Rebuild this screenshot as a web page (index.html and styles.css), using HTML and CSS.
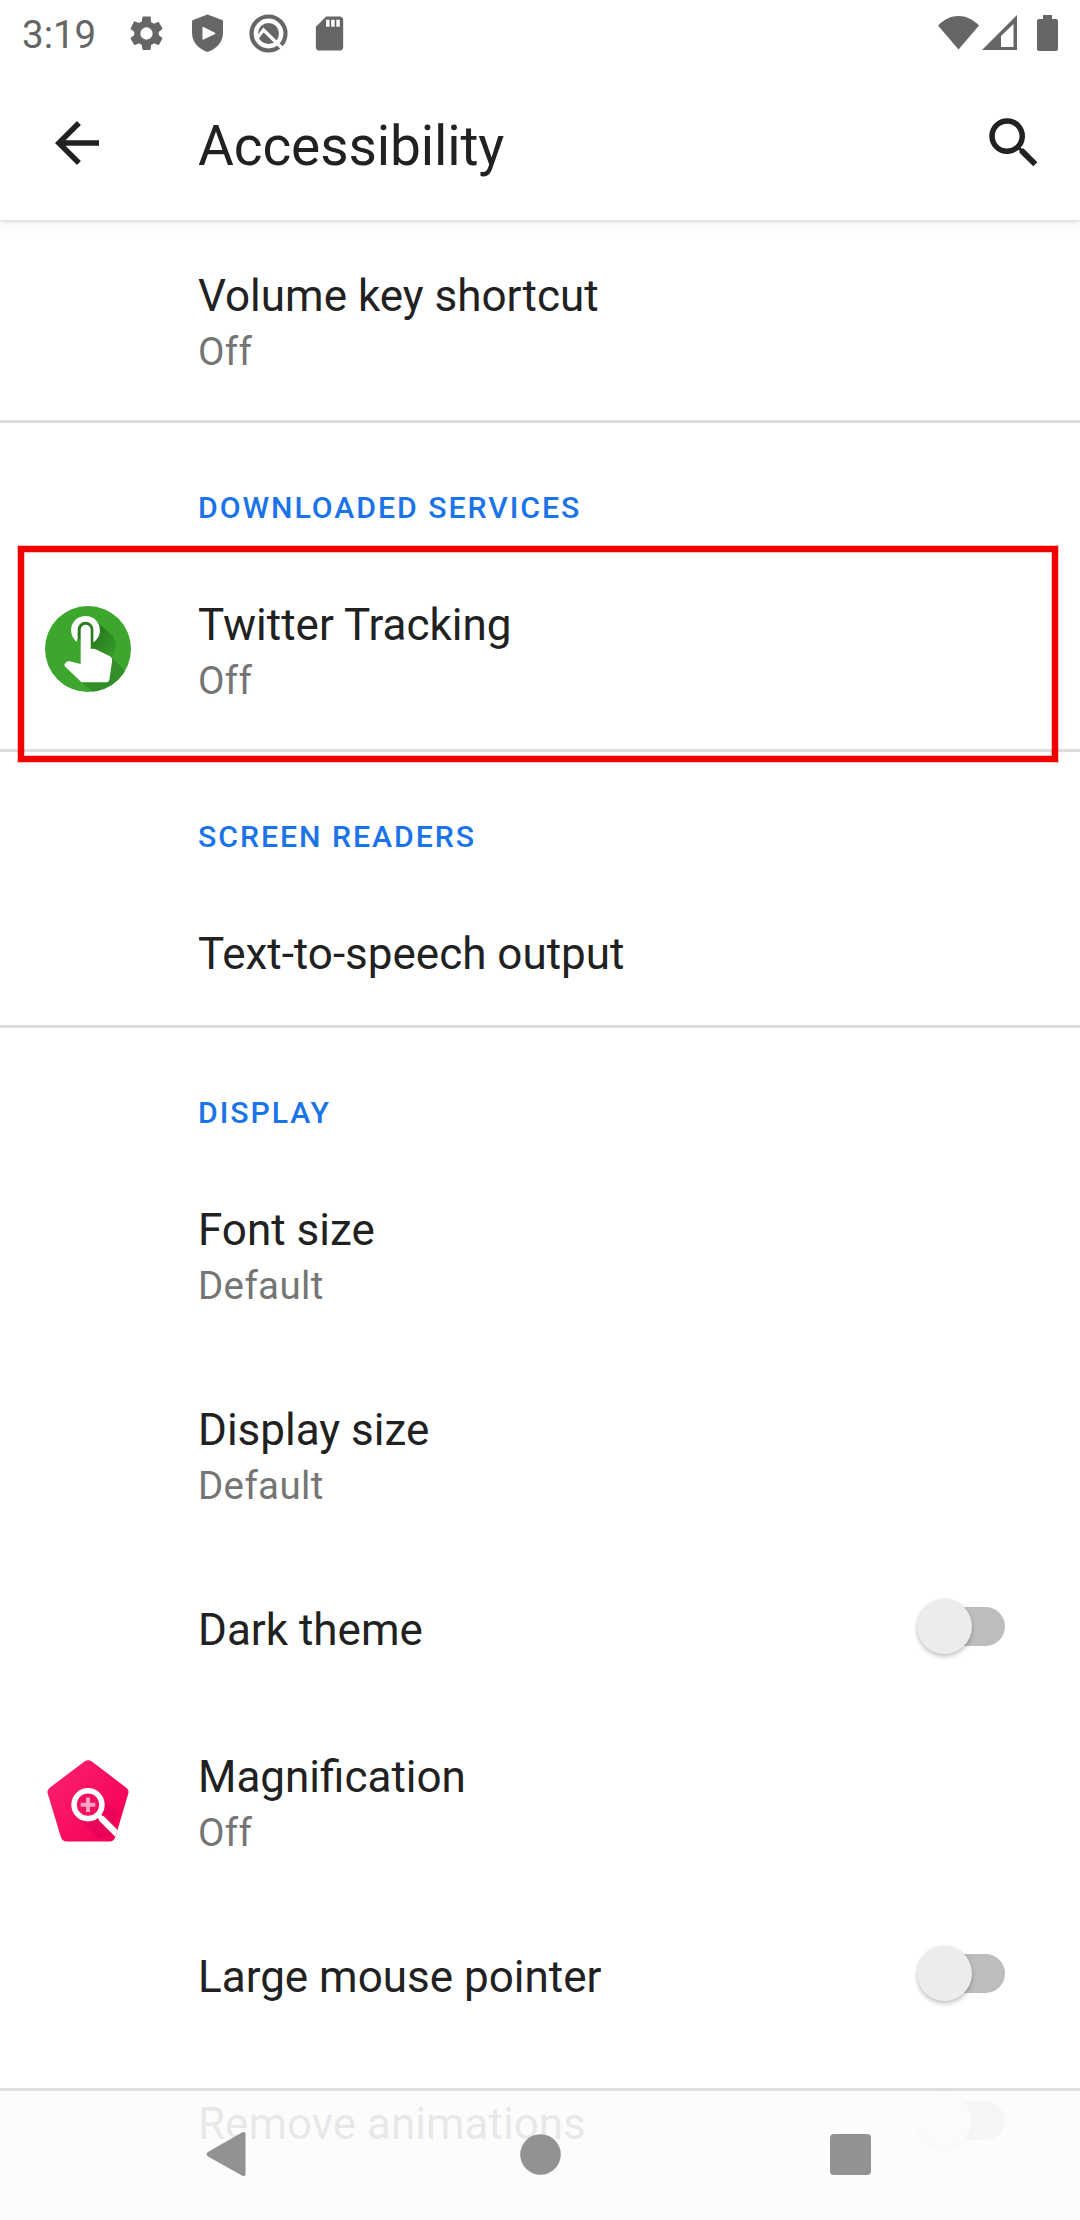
FILE: index.html
```html
<!DOCTYPE html>
<html lang="en">
<head>
<meta charset="utf-8">
<title>Accessibility</title>
<link rel="stylesheet" href="styles.css">
</head>
<body>
<div class="screen">
  <header class="top">
    <div class="status">
      <span class="time">3:19</span>
      <div class="notifications">
        <svg class="status-icon" viewBox="0 0 24 24"><path d="M19.14 12.94c.04-.3.06-.61.06-.94s-.02-.64-.07-.94l2.03-1.58c.18-.14.23-.41.12-.61l-1.92-3.32c-.12-.22-.37-.29-.59-.22l-2.39.96c-.5-.38-1.03-.7-1.62-.94l-.36-2.54A.48.48 0 0 0 13.92 2h-3.84c-.24 0-.43.17-.47.41l-.36 2.54c-.59.24-1.13.57-1.62.94l-2.39-.96c-.22-.08-.47 0-.59.22L2.74 8.87c-.12.21-.08.47.12.61l2.03 1.58c-.05.3-.09.63-.09.94s.02.64.07.94l-2.03 1.58c-.18.14-.23.41-.12.61l1.92 3.32c.12.22.37.29.59.22l2.39-.96c.5.38 1.03.7 1.62.94l.36 2.54c.05.24.24.41.48.41h3.84c.24 0 .44-.17.47-.41l.36-2.54c.59-.24 1.13-.56 1.62-.94l2.39.96c.22.08.47 0 .59-.22l1.92-3.32c.12-.22.07-.47-.12-.61zM12 15.6A3.6 3.6 0 1 1 12 8.4a3.6 3.6 0 0 1 0 7.2z"/></svg>
        <svg class="status-icon" viewBox="0 0 41 41"><path fill-rule="evenodd" d="M20.5 1.5 35 7q1 .4 1 1.500V20c0 9-6.500 16-15.500 19C11.500 36 5 29 5 20V8.500Q5 7.400 6 7zM15.500 14.500v11.500q0 1.200 1 .6l11.500-5.700q1-.6 0-1.200l-11.500-5.800q-1-.6-1 .6z"/></svg>
        <svg class="status-icon" viewBox="0 0 41 41"><circle cx="20.500" cy="20.500" r="17" fill="none" stroke="#666" stroke-width="4.200"/><circle cx="20.500" cy="20.500" r="10.500"/><path d="M9.500 24.500 15.500 17 34 35" fill="none" stroke="#fff" stroke-width="3.200"/></svg>
        <svg class="status-icon" viewBox="0 0 24 24"><path d="M18 2h-8L4.020 8 4 20c0 1.100.9 2 2 2h12c1.100 0 2-.9 2-2V4c0-1.100-.9-2-2-2zm-6 6h-2V4h2v4zm3 0h-2V4h2v4zm3 0h-2V4h2v4z"/></svg>
      </div>
      <div class="signals">
        <svg width="41" height="36" viewBox="0 0 41 36"><path d="M0 10.500C12-2.300 29-2.300 41 10.500L20.500 34.500z"/></svg>
        <svg width="35" height="36" viewBox="0 0 35 36"><path fill-rule="evenodd" d="M0 35 35 0v35zM19 21v11h12.500V9z"/></svg>
        <svg class="battery" width="21" height="36" viewBox="0 0 21 36"><path d="M6 0h9v4h4q2 0 2 2v28q0 2-2 2H2q-2 0-2-2V6q0-2 2-2h4z"/></svg>
      </div>
    </div>
    <div class="toolbar">
      <svg class="action" viewBox="0 0 24 24"><path d="M20 11H7.830l5.590-5.590L12 4l-8 8 8 8 1.410-1.410L7.830 13H20z"/></svg>
      <h1 class="heading">Accessibility</h1>
      <svg class="action" viewBox="0 0 24 24"><path d="M15.500 14h-.79l-.28-.27A6.471 6.471 0 0 0 16 9.500 6.500 6.500 0 1 0 9.500 16c1.610 0 3.090-.59 4.230-1.570l.27.28v.79l5 4.990L20.490 19zm-6 0C7.010 14 5 11.990 5 9.500S7.010 5 9.500 5 14 7.010 14 9.500 11.990 14 9.500 14z"/></svg>
    </div>
  </header>

  <main class="list">
    <div class="row">
      <div class="text"><div class="title">Volume key shortcut</div><div class="summary">Off</div></div>
    </div>

    <h2 class="category">Downloaded services</h2>
    <div class="row highlighted">
      <div class="icon">
        <svg width="86" height="86" viewBox="0 0 86 86">
          <defs>
            <linearGradient id="shade" x1="0" y1="0" x2="1" y2="1"><stop offset="0" stop-color="#226b19"/><stop offset="1" stop-color="#389f2b"/></linearGradient>
            <clipPath id="disc"><circle cx="43" cy="43" r="43"/></clipPath>
          </defs>
          <circle cx="43" cy="43" r="43" fill="#3da72d"/>
          <g clip-path="url(#disc)">
            <path d="M52 16 66 28Q75 38 67 51L45 43z" fill="url(#shade)"/>
            <path d="M66 50 90 76 60 96 35 75z" fill="#328f28"/>
          </g>
          <circle cx="40.500" cy="24.300" r="14.400" fill="#fff"/>
          <path d="M32.700 39V23.500a7.850 7.850 0 0 1 15.700 0V39z" fill="#287e1e"/>
          <path d="M32 33h3.700v9H32z" fill="#3da72d"/>
          <path d="M35.700 58V23.700a5 5 0 0 1 10 0v19h2.500q1.500 0 3 .8L65 50.300q2.500 1.400 2.200 4L64.500 73q-.5 3.300-3 3.300H36.500L20 60.500q-1.300-1.500 0-3 2-2.700 4.500-2.200z" fill="#fff"/>
        </svg>
      </div>
      <div class="text"><div class="title">Twitter Tracking</div><div class="summary">Off</div></div>
    </div>

    <h2 class="category">Screen readers</h2>
    <div class="row">
      <div class="text"><div class="title">Text-to-speech output</div></div>
    </div>

    <h2 class="category">Display</h2>
    <div class="row">
      <div class="text"><div class="title">Font size</div><div class="summary">Default</div></div>
    </div>
    <div class="row">
      <div class="text"><div class="title">Display size</div><div class="summary">Default</div></div>
    </div>
    <div class="row">
      <div class="text"><div class="title">Dark theme</div></div>
      <div class="switch"></div>
    </div>
    <div class="row">
      <div class="icon">
        <svg width="82" height="82" viewBox="0 0 82 82">
          <defs>
            <linearGradient id="pink" x1="0" y1="0.200" x2="0.900" y2="0.900"><stop offset="0" stop-color="#fb1f6e"/><stop offset="1" stop-color="#f50057"/></linearGradient>
            <clipPath id="pentagon"><path d="M37.500 1.500q3.700-2.500 7.400 0L79.300 27.700q3 2.300 2 5.800L68.500 76.500q-1.500 5-6 5H20q-5 0-6.300-5L.7 33.500q-1-3.500 2-5.800z"/></clipPath>
          </defs>
          <g clip-path="url(#pentagon)">
            <path d="M0 0h82v82H0z" fill="url(#pink)"/>
            <path d="M51 35 71 54 65 78 50 78 31 56z" fill="#d90055" opacity=".4"/>
            <path d="M54 58 74 78" stroke="#fff" stroke-width="6.500"/>
          </g>
          <path d="M51 55 68 71.500" stroke="#fff" stroke-width="5"/>
          <circle cx="41" cy="44.700" r="13.900" fill="#f30e60" stroke="#fff" stroke-width="5.600"/>
          <path d="M33.700 44.700h14.600M41 37.400V52" stroke="#faa3c2" stroke-width="4"/>
        </svg>
      </div>
      <div class="text"><div class="title">Magnification</div><div class="summary">Off</div></div>
    </div>
    <div class="row">
      <div class="text"><div class="title">Large mouse pointer</div></div>
      <div class="switch"></div>
    </div>
    <div class="row">
      <div class="text"><div class="title">Remove animations</div></div>
      <div class="switch"></div>
    </div>
  </main>

  <nav class="navbar">
    <svg width="49" height="46" viewBox="0 0 49 46"><path d="M35.500 1.800Q39.500-.5 39.500 3v39.500q0 4-4 1.700L2 25.500q-3-2.200 0-4.500z"/></svg>
    <svg width="41" height="41" viewBox="0 0 41 41"><circle cx="20.500" cy="20.500" r="20.300"/></svg>
    <svg width="41" height="41" viewBox="0 0 41 41"><rect width="41" height="41" rx="4"/></svg>
  </nav>
</div>
</body>
</html>
```
FILE: styles.css
```css
*,
*::before,
*::after {
  box-sizing: border-box;
}

body {
  margin: 0;
  background: #fff;
  font-family: Roboto, "Liberation Sans", sans-serif;
  color: #212121;
}

svg {
  display: block;
  flex: none;
}

.screen {
  position: relative;
  display: flex;
  flex-direction: column;
  width: 1080px;
  height: 2220px;
  overflow: hidden;
}

.top {
  position: relative;
  z-index: 1;
  flex: none;
  height: 220px;
  background: #fff;
  box-shadow: 0 1px 3px rgba(0, 0, 0, 0.14), 0 3px 12px rgba(0, 0, 0, 0.07);
}

.status {
  display: flex;
  align-items: center;
  height: 66px;
  padding: 0 22px;
  color: #666;
  fill: #666;
}

.time {
  width: 104px;
  font-size: 38.5px;
  line-height: 46px;
  padding-top: 3px;
}

.notifications {
  display: flex;
  gap: 20px;
}

.status-icon {
  width: 41px;
  height: 41px;
}

.signals {
  display: flex;
  margin-left: auto;
}

.signals svg + svg {
  margin-left: 3px;
}

.signals .battery {
  margin-left: 20px;
}

.toolbar {
  display: flex;
  align-items: center;
  height: 154px;
  padding: 0 33px 0 44px;
  fill: #212121;
}

.action {
  width: 66px;
  height: 66px;
}

.heading {
  flex: 1;
  margin: 6px 0 0;
  padding-left: 88px;
  font-size: 55px;
  font-weight: 400;
  line-height: 64px;
  letter-spacing: -0.12px;
}

.list {
  flex: none;
}

.row {
  position: relative;
  display: grid;
  grid-template-columns: 198px 1fr auto;
  align-items: start;
  min-height: 147px;
  padding-right: 75px;
}

.icon {
  grid-column: 1;
  align-self: center;
  display: flex;
  justify-content: center;
  width: 176px;
}

.text {
  grid-column: 2;
  padding: 50px 0 45px;
}

.title {
  font-size: 44px;
  line-height: 52px;
}

.summary {
  margin-top: 7px;
  font-size: 38.5px;
  line-height: 46px;
  letter-spacing: 0.35px;
  color: #757575;
}

.category {
  height: 129px;
  margin: 0;
  padding: 67px 0 0 198px;
  border-top: 3px solid #dadce0;
  font-size: 30.25px;
  font-weight: 500;
  line-height: 36px;
  letter-spacing: 1.95px;
  text-transform: uppercase;
  color: #1a73e8;
}

.highlighted::after {
  content: "";
  position: absolute;
  z-index: 1;
  left: 18px;
  right: 22px;
  top: -3px;
  height: 216px;
  border: 6px solid #f00000;
  box-shadow: 0 0 0 1px rgba(240, 0, 0, 0.25), inset 0 0 0 1px rgba(240, 0, 0, 0.25);
}

.switch {
  display: grid;
  grid-column: 3;
  align-items: center;
  width: 88px;
  height: 55px;
  margin-top: 45px;
}

.switch::before,
.switch::after {
  content: "";
  grid-area: 1 / 1;
}

.switch::before {
  justify-self: end;
  width: 70px;
  height: 39px;
  border-radius: 20px;
  background: #bdbdbd;
}

.switch::after {
  width: 55px;
  height: 55px;
  border-radius: 50%;
  background: #ececec;
  box-shadow: 0 3px 4px rgba(0, 0, 0, 0.2), 0 0 3px rgba(0, 0, 0, 0.08);
}

.navbar {
  position: absolute;
  z-index: 2;
  left: 0;
  right: 0;
  bottom: 0;
  display: grid;
  grid-template-columns: repeat(3, 310px);
  justify-content: center;
  justify-items: center;
  align-items: center;
  height: 132px;
  padding-bottom: 3px;
  border-top: 3px solid #dfdfdf;
  background: rgba(252, 252, 252, 0.91);
  background-clip: padding-box;
  fill: #929292;
}
```
